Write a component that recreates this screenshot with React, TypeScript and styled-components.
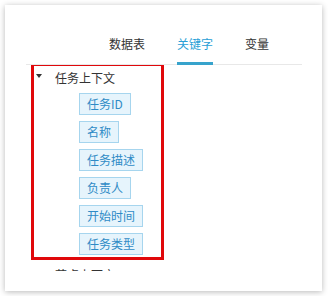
import React from "react";
import styled, { createGlobalStyle } from "styled-components";

const GlobalStyle = createGlobalStyle`
  html, body {
    margin: 0;
    padding: 0;
    background: #fff;
    font-family: "Noto Sans CJK SC", "Noto Sans", sans-serif;
  }
`;

const Page = styled.div`
  padding: 5px;
`;

const Card = styled.div`
  width: 317px;
  height: 286px;
  background: #fff;
  box-shadow: 0 1px 6px rgba(0, 0, 0, 0.28);
  padding: 0 20px 20px 21px;
  box-sizing: border-box;
  display: flex;
  flex-direction: column;
`;

const TabBar = styled.div`
  height: 60px;
  box-sizing: border-box;
  border-bottom: 1px solid #e8e8e8;
  display: flex;
  justify-content: flex-end;
  align-items: flex-end;
  gap: 32px;
  padding-right: 33px;
  flex-shrink: 0;
`;

interface TabProps {
  $active?: boolean;
}

const Tab = styled.div<TabProps>`
  font-size: 12px;
  line-height: 20px;
  padding-bottom: 8px;
  margin-bottom: -1px;
  color: ${(p) => (p.$active ? "#2a9fd6" : "#333")};
  border-bottom: 3px solid ${(p) => (p.$active ? "#37a3cc" : "transparent")};
`;

const Content = styled.div`
  flex: 1;
  overflow: hidden;
`;

interface GroupProps {
  $highlight?: boolean;
}

const Group = styled.div<GroupProps>`
  margin-left: 5px;
  width: 133px;
  box-sizing: border-box;
  border: 3px solid ${(p) => (p.$highlight ? "#e0080b" : "transparent")};
  margin-top: ${(p) => (p.$highlight ? "-2px" : "0")};
  padding: 0 0 2px 2px;
`;

const Header = styled.div`
  display: flex;
  align-items: center;
  height: 22px;
  font-size: 12px;
  color: #333;
`;

const Caret = styled.span`
  width: 0;
  height: 0;
  border-left: 3px solid transparent;
  border-right: 3px solid transparent;
  border-top: 4px solid #333;
  margin-top: -3px;
  margin-right: 13px;
`;

const ChipList = styled.div`
  display: flex;
  flex-direction: column;
  align-items: flex-start;
  gap: 6px;
  padding: 5px 0 0 43px;
`;

const Chip = styled.div`
  height: 22px;
  box-sizing: border-box;
  padding: 0 7px;
  border: 1px solid #a6d5ee;
  background: #e6f4fc;
  color: #2f8bc6;
  font-size: 12px;
  line-height: 20px;
  white-space: nowrap;
`;

const groups = [
  {
    title: "任务上下文",
    items: ["任务ID", "名称", "任务描述", "负责人", "开始时间", "任务类型"],
  },
  { title: "节点上下文", items: [] as string[] },
];

export default function App() {
  return (
    <>
      <GlobalStyle />
      <Page>
        <Card>
          <TabBar>
            <Tab>数据表</Tab>
            <Tab $active>关键字</Tab>
            <Tab>变量</Tab>
          </TabBar>
          <Content>
            {groups.map((g, i) => (
              <Group key={g.title} $highlight={i === 0}>
                <Header>
                  <Caret />
                  {g.title}
                </Header>
                {g.items.length > 0 && (
                  <ChipList>
                    {g.items.map((it) => (
                      <Chip key={it}>{it}</Chip>
                    ))}
                  </ChipList>
                )}
              </Group>
            ))}
          </Content>
        </Card>
      </Page>
    </>
  );
}
